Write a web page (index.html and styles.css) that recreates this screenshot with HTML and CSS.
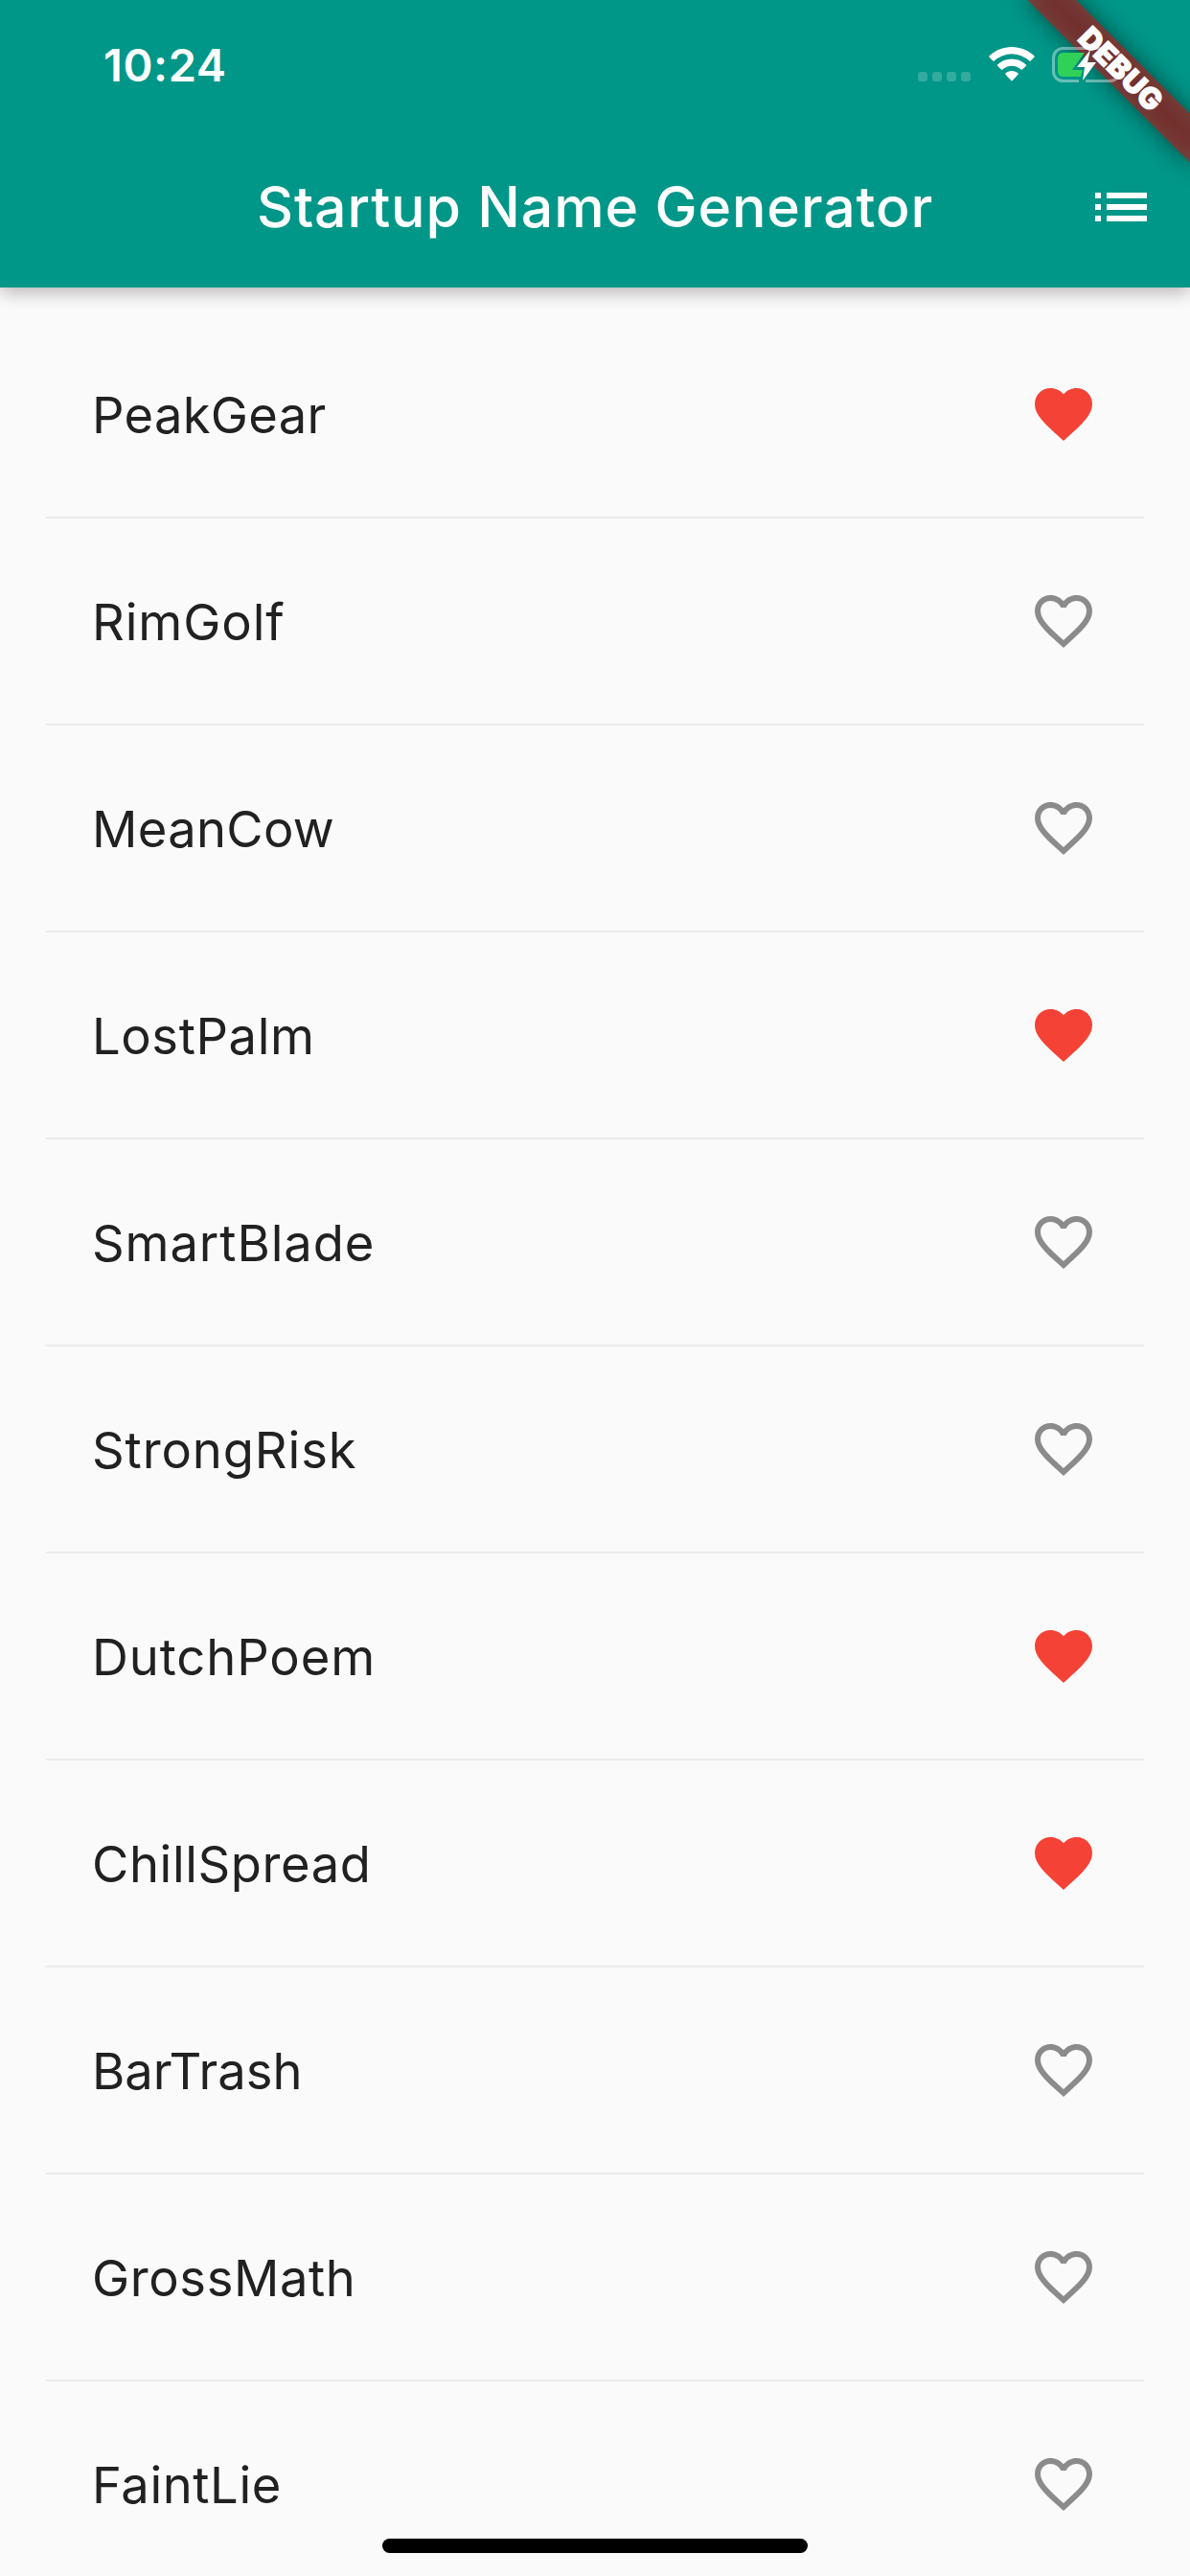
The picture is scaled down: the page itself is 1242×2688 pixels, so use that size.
FILE: index.html
```html
<!DOCTYPE html>
<html lang="en">
<head>
<meta charset="utf-8">
<title>Startup Name Generator</title>
<link rel="stylesheet" href="styles.css">
</head>
<body>
<svg class="symbols" aria-hidden="true">
  <symbol id="heart" viewBox="0 0 24 24"><path d="M12 21.35l-1.45-1.32C5.4 15.36 2 12.28 2 8.5 2 5.42 4.42 3 7.5 3c1.74 0 3.41.81 4.5 2.09C13.09 3.81 14.76 3 16.5 3 19.58 3 22 5.42 22 8.5c0 3.78-3.4 6.86-8.55 11.54L12 21.35z"/></symbol>
  <symbol id="heart-outline" viewBox="0 0 24 24"><path d="M16.5 3c-1.74 0-3.41.81-4.5 2.09C10.91 3.81 9.24 3 7.5 3 4.42 3 2 5.42 2 8.5c0 3.78 3.4 6.86 8.55 11.54L12 21.35l1.45-1.32C18.6 15.36 22 12.28 22 8.5 22 5.42 19.58 3 16.5 3zm-4.4 15.55l-.1.1-.1-.1C7.14 14.24 4 11.39 4 8.5 4 6.5 5.5 5 7.5 5c1.54 0 3.04.99 3.57 2.36h1.87C13.46 5.99 14.96 5 16.5 5c2 0 3.5 1.5 3.5 3.5 0 2.89-3.14 5.74-7.9 10.05z"/></symbol>
</svg>
<div class="screen">
  <header class="header">
    <div class="status">
      <span class="time">10:24</span>
      <div class="indicators">
        <div class="signal"><i></i><i></i><i></i><i></i></div>
        <svg class="wifi" viewBox="0 0 48 36"><path d="M24 0C33 0 41.500 3.500 47.400 9.300Q48 10 47.400 10.700L43.600 14.500Q42.900 15.100 42.200 14.500A26.500 26.500 0 0 0 5.800 14.500Q5.100 15.100 4.400 14.500L.6 10.700Q0 10 .6 9.300C6.500 3.500 15 0 24 0z"/><path d="M24 12.500C29.800 12.500 35 14.700 38.900 18.400Q39.500 19 38.900 19.700L35.100 23.500Q34.400 24.100 33.700 23.500A14.200 14.200 0 0 0 14.300 23.500Q13.600 24.100 12.900 23.500L9.100 19.700Q8.500 19 9.100 18.400C13 14.700 18.200 12.500 24 12.500z"/><path d="M24 25C26.700 25 29 26 30.600 27.600Q31.100 28.200 30.600 28.800L24.700 35.100Q24 35.700 23.300 35.100L17.400 28.800Q16.900 28.200 17.400 27.600C19 26 21.300 25 24 25z"/></svg>
        <svg class="battery" viewBox="0 0 78 42"><path class="shell" d="M42 3.500H60.500a10 10 0 0 1 10 10v14a10 10 0 0 1-10 10H35M28 37.500H11.500a10 10 0 0 1-10-10v-14a10 10 0 0 1 10-10H37"/><path class="charge" d="M12 8H34L21 26H32L30 33H12Q6 33 6 27V14Q6 8 12 8z"/><path class="bolt" d="M40 5L26 23H34L32 37L46 18H37z"/></svg>
      </div>
    </div>
    <div class="appbar">
      <h1 class="title">Startup Name Generator</h1>
      <svg class="menu" viewBox="0 0 24 24"><path d="M3 13h2v-2H3v2zm0 4h2v-2H3v2zm0-8h2V7H3v2zm4 4h14v-2H7v2zm0 4h14v-2H7v2zM7 7v2h14V7H7z"/></svg>
    </div>
    <div class="corner"><div class="ribbon-shadow"></div><div class="ribbon">DEBUG</div></div>
  </header>
  <ul class="names">
    <li class="row"><span>PeakGear</span><svg class="heart saved"><use href="#heart"/></svg></li>
    <li class="row looser"><span>RimGolf</span><svg class="heart"><use href="#heart-outline"/></svg></li>
    <li class="row"><span>MeanCow</span><svg class="heart"><use href="#heart-outline"/></svg></li>
    <li class="row loose"><span>LostPalm</span><svg class="heart saved"><use href="#heart"/></svg></li>
    <li class="row looser"><span>SmartBlade</span><svg class="heart"><use href="#heart-outline"/></svg></li>
    <li class="row looser"><span>StrongRisk</span><svg class="heart"><use href="#heart-outline"/></svg></li>
    <li class="row looser"><span>DutchPoem</span><svg class="heart saved"><use href="#heart"/></svg></li>
    <li class="row loose"><span>ChillSpread</span><svg class="heart saved"><use href="#heart"/></svg></li>
    <li class="row tight"><span>BarTrash</span><svg class="heart"><use href="#heart-outline"/></svg></li>
    <li class="row loose"><span>GrossMath</span><svg class="heart"><use href="#heart-outline"/></svg></li>
    <li class="row loose"><span>FaintLie</span><svg class="heart"><use href="#heart-outline"/></svg></li>
  </ul>
  <div class="home-indicator"></div>
</div>
</body>
</html>
```
FILE: styles.css
```css
* { box-sizing: border-box; }
body { margin: 0; font-family: Inter, "Liberation Sans", sans-serif; }
.symbols { display: none; }
.screen { position: relative; width: 1242px; height: 2688px; overflow: hidden; background: #fafafa; }
.header {
  position: relative;
  z-index: 1;
  height: 300px;
  background: #009688;
  color: #fff;
  box-shadow: 0 3px 18px rgba(0,0,0,.14), 0 6px 18px rgba(0,0,0,.16);
}
.status { position: relative; z-index: 2; display: flex; justify-content: space-between; height: 132px; padding: 0 66px 0 108px; }
.time { padding-top: 39px; font-size: 47px; line-height: 58px; font-weight: 600; letter-spacing: .6px; }
.indicators { display: flex; align-items: flex-start; }
.signal { display: flex; gap: 5px; margin: 75px 19px 0 0; }
.signal i { width: 10px; height: 10px; border-radius: 3px; background: rgba(255,255,255,.2); }
.wifi { width: 48px; height: 36px; margin: 49px 18px 0 0; fill: #fff; }
.battery { width: 78px; height: 42px; margin-top: 47px; }
.shell { fill: none; stroke: rgba(255,255,255,.4); stroke-width: 3; }
.charge { fill: #30d158; }
.bolt { fill: #fff; }
.appbar { display: grid; grid-template-columns: 1fr auto 1fr; align-items: center; height: 168px; padding: 0 36px; }
.title { grid-column: 2; margin: 0; font-size: 59px; line-height: 72px; font-weight: 550; letter-spacing: .85px; white-space: nowrap; }
.menu { justify-self: end; width: 72px; height: 72px; fill: #fff; }
.corner { position: absolute; top: 0; right: 0; width: 240px; height: 240px; overflow: hidden; }
.ribbon, .ribbon-shadow {
  position: absolute;
  left: 120px;
  top: 84px;
  width: 240px;
  height: 36px;
  transform: rotate(45deg);
  transform-origin: 120px -84px;
}
.ribbon-shadow { background: rgba(0,0,0,.5); filter: blur(12px); }
.ribbon { background: rgba(183,28,28,.627); font-size: 31px; line-height: 36px; font-weight: 900; letter-spacing: .2px; text-align: center; -webkit-text-stroke: 1px #fff; }
.names { margin: 0; padding: 48px 48px 0; list-style: none; }
.row {
  display: flex;
  align-items: center;
  justify-content: space-between;
  height: 168px;
  margin-bottom: 48px;
  padding: 0 48px;
  font-size: 52.500px;
  line-height: 72px;
  letter-spacing: .3px;
  color: #212121;
  position: relative;
}
.row span { padding-top: 2px; }
.tight { letter-spacing: 0; }
.loose { letter-spacing: .6px; }
.looser { letter-spacing: .9px; }
.row::after { content: ""; position: absolute; left: 0; right: 0; bottom: -25px; height: 2px; background: #ebebeb; }
.heart { width: 72px; height: 72px; fill: #8b8b8b; }
.saved { fill: #f44336; }
.home-indicator { position: absolute; left: 399px; bottom: 24px; width: 444px; height: 15px; border-radius: 8px; background: #000; }
```
